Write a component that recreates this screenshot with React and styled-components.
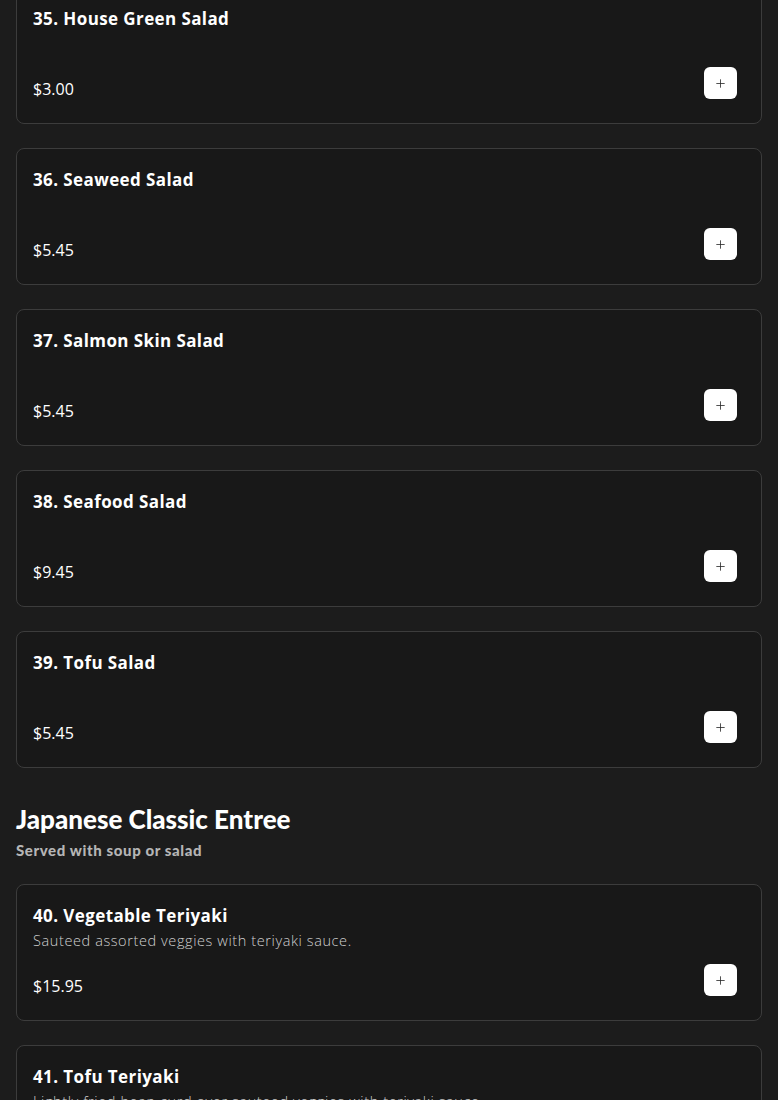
import React from "react";
import styled, { createGlobalStyle } from "styled-components";
import { Plus } from "lucide-react";

const GlobalStyle = createGlobalStyle`
  html, body {
    margin: 0;
    background: #1c1c1c;
    color: #fff;
    font-family: "Open Sans", "Liberation Sans", sans-serif;
  }
`;

const Page = styled.div`
  margin-top: -13px;
  padding: 0 16px 40px;
  display: flex;
  flex-direction: column;
`;

const Section = styled.section`
  display: flex;
  flex-direction: column;
  gap: 24px;
  margin-bottom: ${(p) => (p.last ? "0" : "35px")};
`;

const SectionHead = styled.div`
  display: flex;
  flex-direction: column;
  gap: 6px;
  margin-bottom: 1px;
`;

const SectionTitle = styled.h2`
  margin: 0;
  font-family: "Lato", sans-serif;
  font-weight: 900;
  font-size: 26px;
  line-height: 32px;
  color: #fff;
`;

const SectionSub = styled.div`
  font-family: "Lato", sans-serif;
  font-weight: 900;
  font-size: 15px;
  line-height: 18px;
  color: #b5b5b5;
  letter-spacing: 0.6px;
`;

const Card = styled.div`
  background: #181818;
  border: 1px solid #3c3c3c;
  border-radius: 8px;
  padding: 20px 24px 24px 16px;
  display: flex;
  flex-direction: column;
`;

const Title = styled.div`
  font-weight: 700;
  font-size: 17px;
  line-height: 22px;
  letter-spacing: 0.4px;
  color: #fff;
`;

const Desc = styled.div`
  min-height: 20px;
  margin-top: 4px;
  font-size: 14.5px;
  line-height: 20px;
  font-weight: 300;
  letter-spacing: 0.6px;
  color: #cfcfcf;
`;

const Bottom = styled.div`
  margin-top: 13px;
  display: flex;
  justify-content: space-between;
  align-items: flex-start;
`;

const Price = styled.div`
  font-size: 16px;
  line-height: 20px;
  color: #fff;
  padding-top: 12px;
`;

const AddButton = styled.button`
  width: 33px;
  height: 32px;
  border: none;
  border-radius: 6px;
  background: #fff;
  color: #2a2a2a;
  display: flex;
  align-items: center;
  justify-content: center;
  padding: 0;
  cursor: pointer;
`;

const salads = [
  { name: "35. House Green Salad", price: "$3.00" },
  { name: "36. Seaweed Salad", price: "$5.45" },
  { name: "37. Salmon Skin Salad", price: "$5.45" },
  { name: "38. Seafood Salad", price: "$9.45" },
  { name: "39. Tofu Salad", price: "$5.45" },
];

const entrees = [
  {
    name: "40. Vegetable Teriyaki",
    desc: "Sauteed assorted veggies with teriyaki sauce.",
    price: "$15.95",
  },
  {
    name: "41. Tofu Teriyaki",
    desc: "Lightly fried bean curd over sauteed veggies with teriyaki sauce.",
    price: "$16.95",
  },
];

function MenuCard({ item }) {
  return (
    <Card>
      <Title>{item.name}</Title>
      <Desc>{item.desc}</Desc>
      <Bottom>
        <Price>{item.price}</Price>
        <AddButton aria-label="Add">
          <Plus size={13} strokeWidth={1.5} />
        </AddButton>
      </Bottom>
    </Card>
  );
}

export default function App() {
  return (
    <>
      <GlobalStyle />
      <Page>
        <Section>
          {salads.map((item) => (
            <MenuCard key={item.name} item={item} />
          ))}
        </Section>
        <Section last>
          <SectionHead>
            <SectionTitle>Japanese Classic Entree</SectionTitle>
            <SectionSub>Served with soup or salad</SectionSub>
          </SectionHead>
          {entrees.map((item) => (
            <MenuCard key={item.name} item={item} />
          ))}
        </Section>
      </Page>
    </>
  );
}
